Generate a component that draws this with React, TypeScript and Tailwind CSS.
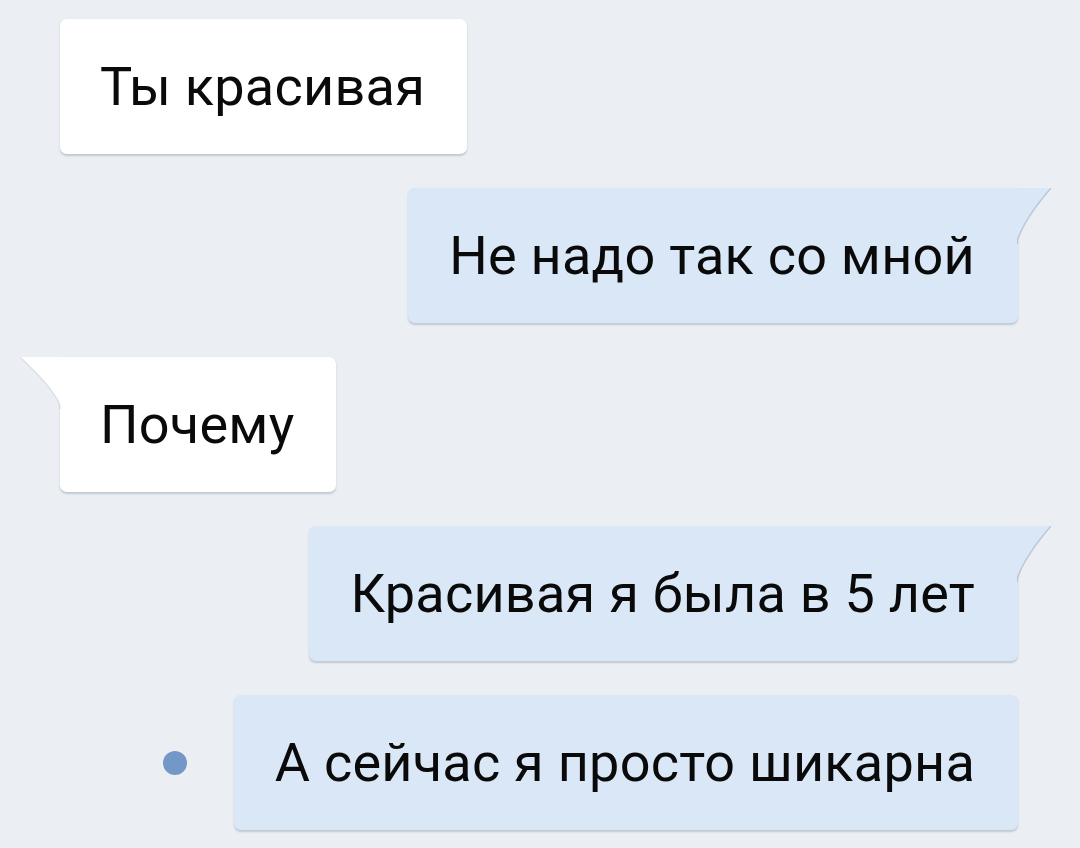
import React from 'react';

type Msg = { text: string; out: boolean; tail: boolean; dot?: boolean };

const MESSAGES: Msg[] = [
  { text: 'Ты красивая', out: false, tail: false },
  { text: 'Не надо так со мной', out: true, tail: true },
  { text: 'Почему', out: false, tail: true },
  { text: 'Красивая я была в 5 лет', out: true, tail: true },
  { text: 'А сейчас я просто шикарна', out: true, tail: false, dot: true },
];

function Bubble({ msg }: { msg: Msg }) {
  const color = msg.out ? '#d9e7f7' : '#ffffff';
  return (
    <div className={`flex items-center ${msg.out ? 'justify-end' : 'justify-start'}`}>
      {msg.dot && <span className="w-[24px] h-[24px] rounded-full bg-[#7398c8] mr-[47px]" />}
      <div
        className={`relative h-[135px] flex items-center rounded-[7px] shadow-[0_1.5px_2px_rgba(60,80,110,0.24)] ${
          msg.out ? 'bg-[#d9e7f7] pl-[41px] pr-[43px]' : 'bg-white pl-[40px] pr-[42px]'
        } ${msg.tail && msg.out ? 'rounded-tr-none' : ''} ${msg.tail && !msg.out ? 'rounded-tl-none' : ''}`}
      >
        {msg.tail && msg.out && (
          <svg className="absolute top-0 -right-[34px]" width="35" height="56" viewBox="0 0 35 56">
            <path d="M0 0 H34 Q10 28 2 48 Q0 52 0 56 Z" fill={color} />
            <path d="M34 0 Q10 28 2 48 Q0 52 0 56" fill="none" stroke="rgba(60,80,110,0.22)" strokeWidth="1.5" />
          </svg>
        )}
        {msg.tail && !msg.out && (
          <svg className="absolute top-0 -left-[40px]" width="41" height="52" viewBox="0 0 41 52">
            <path d="M41 0 H0 Q28 26 37 42 Q40 46 40 52 H41 Z" fill={color} />
            <path d="M0 0 Q28 26 37 42 Q40 46 40 52" fill="none" stroke="rgba(60,80,110,0.12)" strokeWidth="1.5" />
          </svg>
        )}
        <span className="relative text-[54px] leading-none text-[#0a0a0a] tracking-[0.25px]">{msg.text}</span>
      </div>
    </div>
  );
}

export default function App() {
  return (
    <div
      className="w-[1080px] h-[848px] bg-[#ebeff4] overflow-hidden pt-[19px] pl-[60px] pr-[62px] flex flex-col gap-[34px]"
      style={{ fontFamily: 'Roboto, "Noto Sans", sans-serif' }}
    >
      {MESSAGES.map((m, i) => (
        <Bubble key={i} msg={m} />
      ))}
    </div>
  );
}
